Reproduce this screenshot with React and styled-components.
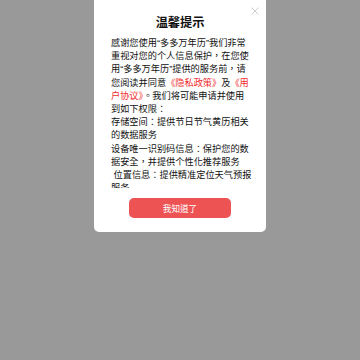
import React from 'react';
import styled, { createGlobalStyle } from 'styled-components';

const GlobalStyle = createGlobalStyle`
    html, body {
        margin: 0;
        padding: 0;
        background: #999999;
    }
    body {
        font-family: "Liberation Sans", "Noto Sans CJK TC", sans-serif;
        width: 360px;
        height: 360px;
        overflow: hidden;
    }
`

export default function App() {
    return (
        <Page>
            <GlobalStyle />
            <Dialog>
                <Close aria-label="关闭">
                    <svg width="8" height="8" viewBox="0 0 8 8">
                        <path d="M0.5 0.5 L7.5 7.5 M7.5 0.5 L0.5 7.5" stroke="#cfcfcf" strokeWidth="1" fill="none" />
                    </svg>
                </Close>
                <Title>温馨提示</Title>
                <Body>
                    <Para>
                        感谢您使用“多多万年历”我们非常重视对您的个人信息保护，在您使用“多多万年历”提供的服务前，请您阅读并同意<Link>《隐私政策》</Link>及<Link>《用户协议》</Link>。我们将可能申请并使用到如下权限：
                    </Para>
                    <Para>存储空间：提供节日节气黄历相关的数据服务</Para>
                    <Para>设备唯一识别码信息：保护您的数据安全，并提供个性化推荐服务</Para>
                    <Para> 位置信息：提供精准定位天气预报服务</Para>
                </Body>
                <Button>我知道了</Button>
            </Dialog>
        </Page>
    )
}

const Page = styled.div`
    width: 360px;
    height: 360px;
    display: flex;
    justify-content: center;
    align-items: flex-start;
`

const Dialog = styled.div`
    position: relative;
    width: 172px;
    background: #ffffff;
    border-radius: 0 0 5px 5px;
    padding: 15px 0 14px;
    display: flex;
    flex-direction: column;
    align-items: center;
`

const Close = styled.div`
    position: absolute;
    top: 7px;
    right: 7px;
    width: 8px;
    height: 8px;
    display: flex;
`

const Title = styled.div`
    font-size: 12.2px;
    line-height: 16px;
    font-weight: 700;
    color: #111111;
`

const Body = styled.div`
    width: 141px;
    margin: 6px 0 0 3px;
    height: 151px;
    overflow: hidden;
    font-size: 9.2px;
    line-height: 13.2px;
    color: #111111;
`

const Para = styled.div`
    white-space: pre-wrap;
`

const Link = styled.span`
    color: #ef2b2b;
`

const Button = styled.div`
    margin-top: 10px;
    width: 102px;
    height: 20px;
    border-radius: 5px;
    background: #ee5354;
    color: #ffffff;
    font-size: 8.6px;
    display: flex;
    align-items: center;
    justify-content: center;
`
